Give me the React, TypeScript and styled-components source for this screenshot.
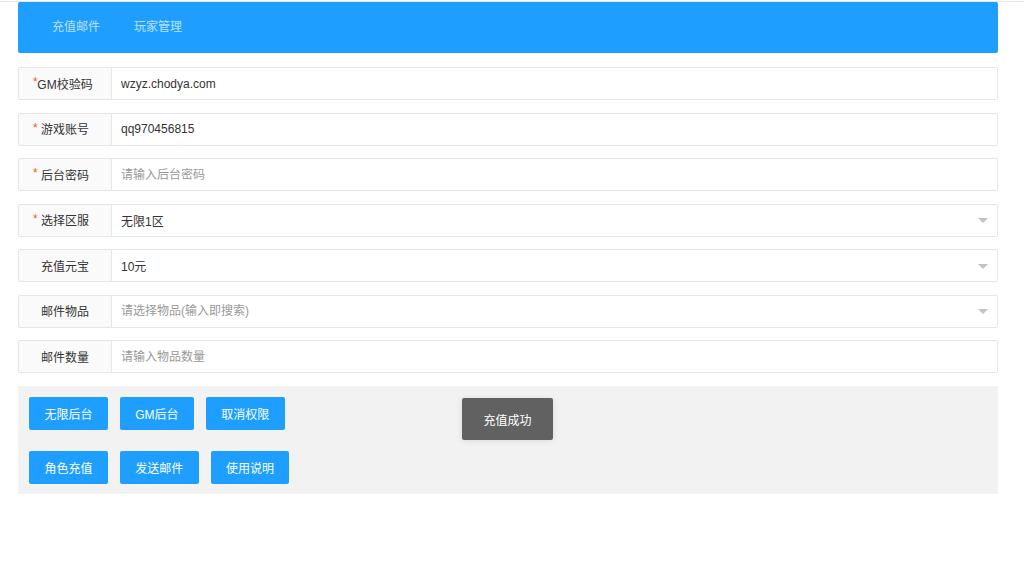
import styled, { createGlobalStyle } from "styled-components";

const GlobalStyle = createGlobalStyle`
  html, body {
    margin: 0;
    padding: 0;
    background: #fff;
  }
  body {
    font-family: "Liberation Sans", Arial, "Noto Sans CJK SC", sans-serif;
    font-size: 12px;
    color: #333;
  }
  * {
    box-sizing: border-box;
  }
`;

const Page = styled.div`
  border-top: 1px solid #e8e8e8;
  margin-top: 1px;
  padding: 0 26px 40px 18px;
  position: relative;
`;

const Nav = styled.ul`
  display: flex;
  align-items: center;
  height: 51px;
  margin: 0 0 14px;
  padding: 0 17px;
  list-style: none;
  background-color: #1e9fff;
  border-radius: 2px;
`;

const NavItem = styled.li`
  padding: 0 17px;
  line-height: 51px;
  font-size: 12px;
  color: rgba(255, 255, 255, 0.7);
  cursor: pointer;
`;

const Form = styled.form`
  display: flex;
  flex-direction: column;
  gap: 12.5px;
`;

const FormItem = styled.div`
  display: flex;
  height: 33px;
`;

const Label = styled.label`
  position: relative;
  flex: 0 0 94px;
  display: flex;
  align-items: center;
  justify-content: center;
  padding-bottom: 1px;
  background-color: #fafafa;
  border: 1px solid #e6e6e6;
  border-radius: 2px 0 0 2px;
  color: #333;
`;

const Star = styled.span`
  position: absolute;
  left: 14px;
  top: 8px;
  font-size: 12px;
  line-height: 1;
  color: #ff5722;
`;

const InputWrap = styled.div`
  position: relative;
  flex: 1;
  display: flex;
`;

const Input = styled.input`
  flex: 1;
  height: 100%;
  padding: 0 9px;
  border: 1px solid #e6e6e6;
  border-left: none;
  border-radius: 0 2px 2px 0;
  font-family: inherit;
  font-size: 12px;
  color: #333;
  background: #fff;
  outline: none;

  &::placeholder {
    color: #999;
  }
`;

const Arrow = styled.i`
  position: absolute;
  right: 10px;
  top: 50%;
  margin-top: -2px;
  width: 0;
  height: 0;
  border-left: 5px solid transparent;
  border-right: 5px solid transparent;
  border-top: 5px solid #c2c2c2;
`;

const ButtonPanel = styled.div`
  margin-top: 12.5px;
  padding: 11px 11px 10px;
  background-color: #f2f2f2;
  display: flex;
  flex-direction: column;
  gap: 21px;
`;

const ButtonRow = styled.div`
  display: flex;
  gap: 12px;
`;

const Button = styled.button`
  height: 33px;
  padding: 0 15.4px;
  border: none;
  border-radius: 2px;
  background-color: #1e9fff;
  color: #fff;
  font-family: inherit;
  font-size: 12px;
  white-space: nowrap;
  cursor: pointer;
`;

const Toast = styled.div`
  position: absolute;
  left: 462px;
  top: 396px;
  width: 91px;
  height: 42px;
  display: flex;
  align-items: center;
  justify-content: center;
  background-color: rgba(0, 0, 0, 0.6);
  border-radius: 2px;
  color: #fff;
  font-size: 12px;
  box-shadow: 0 1px 6px rgba(0, 0, 0, 0.1);
`;

type Field = {
  label: string;
  required?: boolean;
  value?: string;
  placeholder?: string;
  select?: boolean;
};

const fields: Field[] = [
  { label: "GM校验码", required: true, value: "wzyz.chodya.com" },
  { label: "游戏账号", required: true, value: "qq970456815" },
  { label: "后台密码", required: true, placeholder: "请输入后台密码" },
  { label: "选择区服", required: true, value: "无限1区", select: true },
  { label: "充值元宝", value: "10元", select: true },
  { label: "邮件物品", placeholder: "请选择物品(输入即搜索)", select: true },
  { label: "邮件数量", placeholder: "请输入物品数量" },
];

const buttonRows = [
  ["无限后台", "GM后台", "取消权限"],
  ["角色充值", "发送邮件", "使用说明"],
];

function App() {
  return (
    <>
      <GlobalStyle />
      <Page>
        <Nav>
          <NavItem>充值邮件</NavItem>
          <NavItem>玩家管理</NavItem>
        </Nav>
        <Form onSubmit={(e) => e.preventDefault()}>
          {fields.map((f) => (
            <FormItem key={f.label}>
              <Label>
                {f.required && <Star>*</Star>}
                {f.label}
              </Label>
              <InputWrap>
                <Input
                  defaultValue={f.value}
                  placeholder={f.placeholder}
                  readOnly={f.select}
                />
                {f.select && <Arrow />}
              </InputWrap>
            </FormItem>
          ))}
        </Form>
        <ButtonPanel>
          {buttonRows.map((row, i) => (
            <ButtonRow key={i}>
              {row.map((text) => (
                <Button key={text} type="button">
                  {text}
                </Button>
              ))}
            </ButtonRow>
          ))}
        </ButtonPanel>
        <Toast>充值成功</Toast>
      </Page>
    </>
  );
}

export default App;
